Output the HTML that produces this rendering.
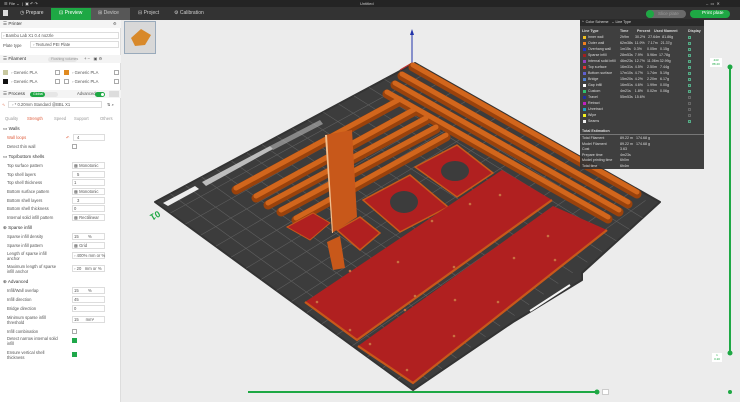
<!DOCTYPE html>
<html><head><meta charset="utf-8"><style>
*{margin:0;padding:0;box-sizing:border-box}
body{width:740px;height:402px;overflow:hidden;background:#ececec;font-family:"Liberation Sans",sans-serif;position:relative}
.a{position:absolute;white-space:nowrap}
#lp{position:absolute;left:0;top:20px;width:121px;height:382px;background:#fff;border-right:1px solid #ddd}
.t{position:absolute;font-size:4.2px;color:#555;white-space:nowrap}
.h{font-size:4.6px;color:#333}
.in{position:absolute;border:1px solid #ddd;background:#fff;height:7px}
.cb{position:absolute;width:5px;height:5px;border:1px solid #aaa;background:#fff}
.cg{background:#1fa84a;border-color:#1fa84a}
#lg{position:absolute;left:580px;top:19px;width:124px;height:150px;background:rgba(50,50,50,.93);color:#ddd;font-size:3.6px}
#lg .a{font-size:3.6px;color:#ddd}
.sw{position:absolute;width:3px;height:3px}
.ck{position:absolute;left:108px;width:3px;height:3px;background:#3a6a44;border:0.5px solid #5a8}
</style></head><body>
<div class="a" style="left:0;top:0;width:740px;height:7px;background:#242424"></div>
<div class="a" style="left:4px;top:1px;font-size:4px;color:#ccc">☰ File ⌄ &nbsp;| &nbsp;▣ ↶ ↷</div>
<div class="a" style="left:360px;top:1px;font-size:4px;color:#ccc">Untitled</div>
<div class="a" style="left:706px;top:1px;font-size:4px;color:#ccc">–&nbsp; ▭ &nbsp;✕</div>
<div class="a" style="left:0;top:7px;width:740px;height:13px;background:#333"></div>
<div class="a" style="left:3px;top:10px;width:5px;height:6px;background:#ddd"></div>
<div class="a" style="left:20px;top:10px;font-size:5px;color:#ddd">◷ Prepare</div>
<div class="a" style="left:51px;top:8px;width:40px;height:12px;background:#1ea844"></div>
<div class="a" style="left:59px;top:10px;font-size:5px;color:#fff">⊡ Preview</div>
<div class="a" style="left:91px;top:8px;width:39px;height:12px;background:#575757"></div>
<div class="a" style="left:98px;top:10px;font-size:5px;color:#ccc">⊞ Device</div>
<div class="a" style="left:138px;top:10px;font-size:5px;color:#ccc">⊟ Project</div>
<div class="a" style="left:174px;top:10px;font-size:5px;color:#ccc">⚙ Calibration</div>
<div class="a" style="left:646px;top:10px;width:40px;height:8px;border-radius:4px;background:#6a6a6a"></div>
<div class="a" style="left:646px;top:10px;width:8px;height:8px;border-radius:4px;background:#1ea844"></div>
<div class="a" style="left:658px;top:11px;font-size:4.5px;color:#999">Slice plate</div>
<div class="a" style="left:690px;top:10px;width:40px;height:8px;border-radius:4px;background:#1ea844"></div>
<div class="a" style="left:702px;top:11px;font-size:4.8px;color:#fff">Print plate</div>

<div id="lp">
<div class="a" style="left:0;top:0;width:121px;height:8px;background:#f4f4f4"></div>
<div class="t h" style="left:3px;top:1px">☰ Printer</div>
<div class="t" style="left:113px;top:1px">⚙</div>
<div class="in" style="left:1px;top:12px;width:118px"></div>
<div class="t" style="left:3px;top:13px">◦ Bambu Lab X1 0.4 nozzle</div>
<div class="t" style="left:3px;top:23px">Plate type</div>
<div class="in" style="left:30px;top:21px;width:89px"></div>
<div class="t" style="left:33px;top:22px">◦ Textured PEI Plate</div>
<div class="a" style="left:0;top:35px;width:121px;height:8px;background:#f4f4f4"></div>
<div class="t h" style="left:3px;top:36px">☰ Filament</div>
<div class="a" style="left:48px;top:37px;width:29px;height:5px;border-radius:3px;background:#e6e6e6"></div>
<div class="t" style="left:51px;top:37px;font-size:3.5px;color:#999">Flushing volumes</div>
<div class="t" style="left:84px;top:36px">+ − &nbsp;&nbsp;▣ ⚙</div>
<div class="a" style="left:3px;top:50px;width:5px;height:5px;background:#c8c8a0"></div>
<div class="t" style="left:11px;top:50px">◦ Generic PLA</div><div class="cb" style="left:55px;top:50px"></div>
<div class="a" style="left:64px;top:50px;width:5px;height:5px;background:#e08a20"></div>
<div class="t" style="left:72px;top:50px">◦ Generic PLA</div><div class="cb" style="left:114px;top:50px"></div>
<div class="a" style="left:3px;top:59px;width:5px;height:5px;background:#111"></div>
<div class="t" style="left:11px;top:59px">◦ Generic PLA</div><div class="cb" style="left:55px;top:59px"></div>
<div class="cb" style="left:64px;top:59px"></div>
<div class="t" style="left:72px;top:59px">◦ Generic PLA</div><div class="cb" style="left:114px;top:59px"></div>
<div class="a" style="left:0;top:70px;width:121px;height:8px;background:#f4f4f4"></div>
<div class="t h" style="left:3px;top:71px">☰ Process</div>
<div class="a" style="left:30px;top:72px;width:28px;height:5px;border-radius:3px;background:#e6e6e6"></div>
<div class="a" style="left:30px;top:72px;width:15px;height:5px;border-radius:3px;background:#1ea844"></div>
<div class="t" style="left:33px;top:72px;font-size:3.5px;color:#fff">Global</div>
<div class="t" style="left:77px;top:71px">Advanced</div>
<div class="a" style="left:95px;top:72px;width:9px;height:5px;border-radius:3px;background:#1ea844"></div>
<div class="a" style="left:100px;top:72px;width:5px;height:5px;border-radius:3px;background:#fff;border:1px solid #1ea844"></div>
<div class="a" style="left:109px;top:71px;width:10px;height:6px;background:#ddd"></div>
<div class="t" style="left:2px;top:82px;color:#e07050">∿</div>
<div class="in" style="left:8px;top:81px;width:94px"></div>
<div class="t" style="left:12px;top:82px">◦ * 0.20mm Standard @BBL X1</div>
<div class="t" style="left:107px;top:82px">⇅ ⌕</div>
<div class="t" style="left:5px;top:96px;color:#999">Quality</div>
<div class="t" style="left:27px;top:96px;color:#e06040">Strength</div>
<div class="t" style="left:54px;top:96px;color:#999">Speed</div>
<div class="t" style="left:74px;top:96px;color:#999">Support</div>
<div class="t" style="left:100px;top:96px;color:#999">Others</div>
<div class="t h" style="left:3px;top:106px">▭ Walls</div>
<div class="t" style="left:7px;top:115px;color:#e06040">Wall loops</div>
<div class="t" style="left:66px;top:115px;color:#e06040">↶</div>
<div class="in" style="left:73px;top:114px;width:32px"></div><div class="t" style="left:77px;top:115px">4</div>
<div class="t" style="left:7px;top:124px">Detect thin wall</div><div class="cb" style="left:72px;top:124px"></div>
<div class="t h" style="left:3px;top:134px">▭ Top/bottom shells</div>
<div class="t" style="left:7px;top:143px">Top surface pattern</div><div class="in" style="left:72px;top:142px;width:33px"></div><div class="t" style="left:74px;top:143px">▩ Monotonic</div>
<div class="t" style="left:7px;top:152px">Top shell layers</div><div class="in" style="left:72px;top:151px;width:33px"></div><div class="t" style="left:77px;top:152px">5</div>
<div class="t" style="left:7px;top:160px">Top shell thickness</div><div class="in" style="left:72px;top:159px;width:33px"></div><div class="t" style="left:74px;top:160px">1</div>
<div class="t" style="left:7px;top:169px">Bottom surface pattern</div><div class="in" style="left:72px;top:168px;width:33px"></div><div class="t" style="left:74px;top:169px">▩ Monotonic</div>
<div class="t" style="left:7px;top:178px">Bottom shell layers</div><div class="in" style="left:72px;top:177px;width:33px"></div><div class="t" style="left:77px;top:178px">3</div>
<div class="t" style="left:7px;top:186px">Bottom shell thickness</div><div class="in" style="left:72px;top:185px;width:33px"></div><div class="t" style="left:74px;top:186px">0</div>
<div class="t" style="left:7px;top:195px">Internal solid infill pattern</div><div class="in" style="left:72px;top:194px;width:33px"></div><div class="t" style="left:74px;top:195px">▩ Rectilinear</div>
<div class="t h" style="left:3px;top:205px">⊕ Sparse infill</div>
<div class="t" style="left:7px;top:214px">Sparse infill density</div><div class="in" style="left:72px;top:213px;width:33px"></div><div class="t" style="left:74px;top:214px">15 &nbsp;&nbsp;&nbsp;&nbsp;&nbsp;&nbsp;&nbsp;%</div>
<div class="t" style="left:7px;top:223px">Sparse infill pattern</div><div class="in" style="left:72px;top:222px;width:33px"></div><div class="t" style="left:74px;top:223px">▩ Grid</div>
<div class="t" style="left:7px;top:231px">Length of sparse infill<br>anchor</div><div class="in" style="left:72px;top:232px;width:33px"></div><div class="t" style="left:74px;top:233px">◦ 400% mm or %</div>
<div class="t" style="left:7px;top:244px">Maximum length of sparse<br>infill anchor</div><div class="in" style="left:72px;top:245px;width:33px"></div><div class="t" style="left:74px;top:246px">◦ 20 &nbsp;&nbsp;mm or %</div>
<div class="t h" style="left:3px;top:259px">⊕ Advanced</div>
<div class="t" style="left:7px;top:268px">Infill/Wall overlap</div><div class="in" style="left:72px;top:267px;width:33px"></div><div class="t" style="left:74px;top:268px">15 &nbsp;&nbsp;&nbsp;&nbsp;&nbsp;&nbsp;&nbsp;%</div>
<div class="t" style="left:7px;top:277px">Infill direction</div><div class="in" style="left:72px;top:276px;width:33px"></div><div class="t" style="left:74px;top:277px">45</div>
<div class="t" style="left:7px;top:286px">Bridge direction</div><div class="in" style="left:72px;top:285px;width:33px"></div><div class="t" style="left:74px;top:286px">0</div>
<div class="t" style="left:7px;top:295px">Minimum sparse infill<br>threshold</div><div class="in" style="left:72px;top:296px;width:33px"></div><div class="t" style="left:74px;top:297px">15 &nbsp;&nbsp;&nbsp;&nbsp;&nbsp;mm²</div>
<div class="t" style="left:7px;top:309px">Infill combination</div><div class="cb" style="left:72px;top:309px"></div>
<div class="t" style="left:7px;top:316px">Detect narrow internal solid<br>infill</div><div class="cb cg" style="left:72px;top:318px"></div>
<div class="t" style="left:7px;top:330px">Ensure vertical shell<br>thickness</div><div class="cb cg" style="left:72px;top:332px"></div>
</div>

<div class="a" style="left:124px;top:21px;width:32px;height:33px;background:#d8d8d8;border:1px solid #9ab"></div>
<svg class="a" style="left:0;top:0" width="740" height="402" viewBox="0 0 740 402">
<defs><clipPath id="bc"><polygon points="155,202 415,63 660,202 582,273 582,280 528,313 513,322 413,390"/></clipPath></defs>
<polygon points="131,38 141,29 151,35 145,45 135,46" fill="#d8892a"/>
<polygon points="155,202 415,63 660,202 582,273 582,280 528,313 513,322 413,390" fill="#3c3c3c" stroke="#333" stroke-width="2" stroke-linejoin="round"/>
<g clip-path="url(#bc)" stroke="#5e5e5e" stroke-width="0.6" fill="none">
<path d="M170.2,213.1L429.4,71.6M185.3,224.1L443.8,80.2M200.5,235.2L458.2,88.8M215.7,246.2L472.6,97.4M230.9,257.3L487.1,105.9M246.1,268.3L501.5,114.5M261.2,279.4L515.9,123.1M276.4,290.5L530.3,131.7M291.6,301.5L544.7,140.3M306.8,312.6L559.1,148.9M322,323.7L573.5,157.5M337.1,334.7L588,166.1M352.3,345.8L602.4,174.6M367.5,356.8L616.8,183.2M382.7,367.9L631.2,191.8M397.8,378.9L645.6,200.4"/>
<path d="M170.3,193.8L427.5,379.4M185.6,185.7L442,368.7M200.9,176.5L456.6,358.1M216.2,169.3L471.1,347.4M231.5,161.1L485.6,336.8M246.8,152.9L500.2,326.1M262.1,144.8L514.7,315.5M277.4,136.6L529.2,304.8M292.6,128.4L543.8,294.2M307.9,120.2L558.3,283.5M323.2,112.1L572.8,272.9M338.5,103.9L587.4,262.2M353.8,95.7L601.9,251.6M369.1,87.5L616.4,240.9M384.4,79.3L631,230.3M399.7,71.2L645.5,219.6"/>
</g>
<polygon points="163,203 195,186 199,189 168,206" fill="#eee"/>
<polygon points="202,182 270,146 273,149 206,186" fill="#ddd" opacity=".8"/>
<polygon points="270,146 320,120 323,124 273,150" fill="#bbb" opacity=".6"/>
<path d="M530,311 L570,285" stroke="#f4f4f4" stroke-width="2"/>
<text x="152" y="218" font-size="9" fill="#1ea844" font-weight="bold" transform="rotate(150 156 215)">01</text>
<line x1="412" y1="63" x2="412" y2="33" stroke="#2233aa" stroke-width="1"/>
<polygon points="410,35 414,35 412,29" fill="#2233aa"/>
<line x1="412" y1="63" x2="400" y2="70" stroke="#c03030" stroke-width="1.2"/>
<line x1="412" y1="63" x2="420" y2="66" stroke="#30b030" stroke-width="1"/>
<g stroke-linecap="round">
<g stroke="#9a420c" stroke-width="9">
<path d="M413,67 L637,194"/><path d="M402,76 L628,204"/><path d="M395,85 L619,212"/><path d="M387,94 L608,219"/>
<path d="M236,190 L400,101"/><path d="M256,198 L415,111"/><path d="M268,205 L426,120"/><path d="M281,212 L436,129"/><path d="M296,220 L446,137"/>
</g>
<g stroke="#d2661c" stroke-width="5">
<path d="M413,65 L637,192"/><path d="M402,74 L628,202"/><path d="M395,83 L619,210"/><path d="M387,92 L608,217"/>
<path d="M236,188 L400,99"/><path d="M256,196 L415,109"/><path d="M268,203 L426,118"/><path d="M281,210 L436,127"/><path d="M296,218 L446,135"/>
</g></g>
<polygon points="363,200 410,175 448,207 400,232" fill="#b02020" stroke="#c85a1a" stroke-width="1.5"/>
<polygon points="415,167 457,145 493,173 457,197" fill="#b02020" stroke="#c85a1a" stroke-width="1.5"/>
<ellipse cx="404" cy="202" rx="14" ry="11" fill="#3c3c3c"/>
<ellipse cx="455" cy="171" rx="14" ry="10" fill="#3c3c3c"/>
<polygon points="305,302 502,170 552,200 357,340" fill="#b02020"/>
<path d="M305,302 L357,340 L552,200" stroke="#c8581a" stroke-width="2.2" fill="none"/>
<polygon points="358,346 553,206 607,230 413,383" fill="#b02020"/>
<path d="M358,346 L413,383 L607,230" stroke="#c8581a" stroke-width="2.2" fill="none"/>
<g fill="#c87040">
<circle cx="317" cy="302" r="1.3"/><circle cx="350" cy="271" r="1.3"/><circle cx="398" cy="262" r="1.3"/><circle cx="432" cy="221" r="1.3"/><circle cx="470" cy="204" r="1.3"/><circle cx="500" cy="195" r="1.3"/><circle cx="350" cy="330" r="1.3"/><circle cx="415" cy="296" r="1.3"/><circle cx="454" cy="267" r="1.3"/>
<circle cx="370" cy="344" r="1.3"/><circle cx="405" cy="310" r="1.3"/><circle cx="455" cy="300" r="1.3"/><circle cx="514" cy="258" r="1.3"/><circle cx="548" cy="236" r="1.3"/><circle cx="555" cy="260" r="1.3"/><circle cx="407" cy="370" r="1.3"/><circle cx="454" cy="336" r="1.3"/><circle cx="498" cy="302" r="1.3"/>
</g>
<polygon points="287,227 313,213 330,223 310,240" fill="#b02020" stroke="#c8581a" stroke-width="1"/>
<polygon points="327,242 340,236 345,268 333,270" fill="#c8581a"/>
<polygon points="337,230 360,217 380,233 360,250" fill="#b02020" stroke="#c8581a" stroke-width="1.5"/>
<polygon points="325,135 352,130 357,217 332,233" fill="#c8581a"/>
<polygon points="325,135 327,135 333,233 332,233" fill="#f0c090"/>
<line x1="730" y1="67" x2="730" y2="353" stroke="#1ea844" stroke-width="2"/>
<circle cx="730" cy="67" r="2.5" fill="#1ea844"/><circle cx="730" cy="353" r="2.5" fill="#1ea844"/>
<line x1="248" y1="392" x2="597" y2="392" stroke="#1ea844" stroke-width="2"/>
<circle cx="597" cy="392" r="2.5" fill="#1ea844"/>
<circle cx="730" cy="392" r="2" fill="#1ea844"/>
</svg>
<div class="a" style="left:710px;top:58px;width:12px;height:9px;background:#fff;font-size:3px;color:#1ea844;text-align:center">443<br>88.40</div>
<div class="a" style="left:712px;top:353px;width:10px;height:9px;background:#fff;font-size:3px;color:#1ea844;text-align:center">1<br>0.20</div>
<div class="a" style="left:602px;top:389px;width:7px;height:6px;background:#fff;border:0.5px solid #ccc"></div>

<div id="lg">
<div class="a" style="left:0;top:0;width:124px;height:7px;background:#2a2a2a"></div>
<div class="a" style="left:2px;top:1px">^ &nbsp;Color Scheme &nbsp;&nbsp;⌄ Line Type</div>
<div class="a" style="left:2px;top:10px;font-weight:bold">Line Type</div>
<div class="a" style="left:40px;top:10px;font-weight:bold">Time</div>
<div class="a" style="left:57px;top:10px;font-weight:bold">Percent</div>
<div class="a" style="left:74px;top:10px;font-weight:bold">Used filament</div>
<div class="a" style="left:108px;top:10px;font-weight:bold">Display</div>
<div class="sw" style="left:3px;top:17px;background:#f0c020"></div><div class="a" style="left:8px;top:16px">Inner wall</div><div class="a" style="left:40px;top:16px">2h9m &nbsp;&nbsp;&nbsp;&nbsp;&nbsp;30.2% &nbsp;&nbsp;27.64m &nbsp;81.86g</div><div class="ck" style="top:17px"></div>
<div class="sw" style="left:3px;top:23px;background:#f08020"></div><div class="a" style="left:8px;top:22px">Outer wall</div><div class="a" style="left:40px;top:22px">62m38s &nbsp;11.9% &nbsp;&nbsp;7.17m &nbsp;&nbsp;21.37g</div><div class="ck" style="top:23px"></div>
<div class="sw" style="left:3px;top:29px;background:#2030d0"></div><div class="a" style="left:8px;top:28px">Overhang wall</div><div class="a" style="left:40px;top:28px">1m15s &nbsp;&nbsp;0.3% &nbsp;&nbsp;&nbsp;&nbsp;0.05m &nbsp;&nbsp;0.15g</div><div class="ck" style="top:29px"></div>
<div class="sw" style="left:3px;top:35px;background:#a02020"></div><div class="a" style="left:8px;top:34px">Sparse infill</div><div class="a" style="left:40px;top:34px">28m53s &nbsp;7.9% &nbsp;&nbsp;&nbsp;5.96m &nbsp;17.78g</div><div class="ck" style="top:35px"></div>
<div class="sw" style="left:3px;top:41px;background:#9040c0"></div><div class="a" style="left:8px;top:40px">Internal solid infill</div><div class="a" style="left:40px;top:40px">46m23s &nbsp;12.7% &nbsp;11.06m 32.99g</div><div class="ck" style="top:41px"></div>
<div class="sw" style="left:3px;top:47px;background:#e03030"></div><div class="a" style="left:8px;top:46px">Top surface</div><div class="a" style="left:40px;top:46px">16m31s &nbsp;4.5% &nbsp;&nbsp;&nbsp;2.50m &nbsp;&nbsp;7.44g</div><div class="ck" style="top:47px"></div>
<div class="sw" style="left:3px;top:53px;background:#6060d0"></div><div class="a" style="left:8px;top:52px">Bottom surface</div><div class="a" style="left:40px;top:52px">17m10s &nbsp;4.7% &nbsp;&nbsp;&nbsp;1.74m &nbsp;&nbsp;5.19g</div><div class="ck" style="top:53px"></div>
<div class="sw" style="left:3px;top:59px;background:#5080d0"></div><div class="a" style="left:8px;top:58px">Bridge</div><div class="a" style="left:40px;top:58px">15m20s &nbsp;4.2% &nbsp;&nbsp;&nbsp;2.20m &nbsp;&nbsp;6.17g</div><div class="ck" style="top:59px"></div>
<div class="sw" style="left:3px;top:65px;background:#fff"></div><div class="a" style="left:8px;top:64px">Gap infill</div><div class="a" style="left:40px;top:64px">16m51s &nbsp;4.6% &nbsp;&nbsp;&nbsp;1.99m &nbsp;&nbsp;0.00g</div><div class="ck" style="top:65px"></div>
<div class="sw" style="left:3px;top:71px;background:#30c070"></div><div class="a" style="left:8px;top:70px">Custom</div><div class="a" style="left:40px;top:70px">4m21s &nbsp;&nbsp;&nbsp;1.8% &nbsp;&nbsp;&nbsp;0.02m &nbsp;&nbsp;0.06g</div><div class="ck" style="top:71px"></div>
<div class="sw" style="left:3px;top:77px;background:#2030a0"></div><div class="a" style="left:8px;top:76px">Travel</div><div class="a" style="left:40px;top:76px">55m53s &nbsp;15.6%</div><div class="ck" style="top:77px;background:#444;border-color:#666"></div>
<div class="sw" style="left:3px;top:83px;background:#c020c0"></div><div class="a" style="left:8px;top:82px">Retract</div><div class="ck" style="top:83px;background:#444;border-color:#666"></div>
<div class="sw" style="left:3px;top:89px;background:#20a0c0"></div><div class="a" style="left:8px;top:88px">Unretract</div><div class="ck" style="top:89px;background:#444;border-color:#666"></div>
<div class="sw" style="left:3px;top:95px;background:#f0f020"></div><div class="a" style="left:8px;top:94px">Wipe</div><div class="ck" style="top:95px;background:#444;border-color:#666"></div>
<div class="sw" style="left:3px;top:101px;background:#eee"></div><div class="a" style="left:8px;top:100px">Seams</div><div class="ck" style="top:101px"></div>
<div class="a" style="left:2px;top:110px;font-weight:bold">Total Estimation</div>
<div class="a" style="left:0;top:115px;width:124px;height:0.5px;background:#777"></div>
<div class="a" style="left:2px;top:117px;line-height:5.6px">Total Filament<br>Model Filament<br>Cost<br>Prepare time<br>Model printing time<br>Total time</div>
<div class="a" style="left:40px;top:117px;line-height:5.6px">89.22 m &nbsp;&nbsp;174.68 g<br>89.22 m &nbsp;&nbsp;174.68 g<br>3.63<br>4m23s<br>6h0m<br>6h4m</div>
</div>
</body></html>
